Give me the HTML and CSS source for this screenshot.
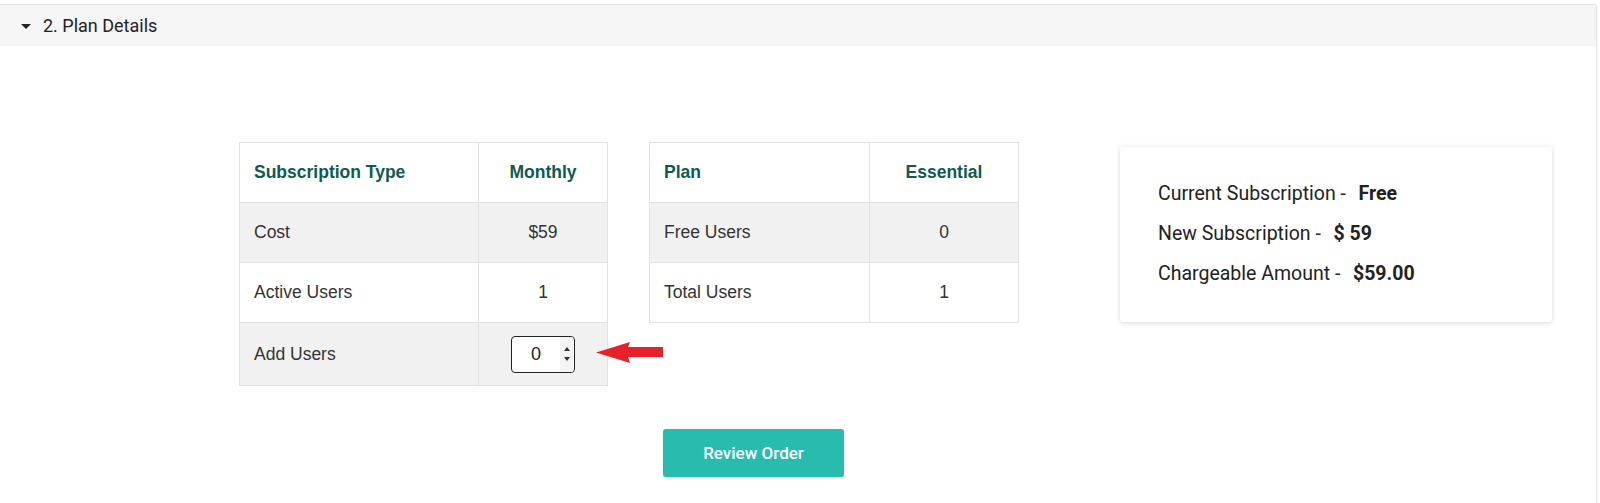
FILE: index.html
```html
<!DOCTYPE html>
<html lang="en">
<head>
    <meta charset="UTF-8">
    <meta name="viewport" content="width=device-width, initial-scale=1.0">
    <title>Plan Details</title>
    <link rel="stylesheet" href="styles.css">
</head>
<body>
    <div class="panel">
        <div class="panel-header">
            <span class="caret"></span>
            <span class="panel-title">2. Plan Details</span>
        </div>

        <div class="plan-row">
            <div class="tables">
                <table class="plan-table plan-table-sub">
                    <colgroup>
                        <col class="col-a">
                        <col class="col-b">
                    </colgroup>
                    <thead>
                        <tr>
                            <th>Subscription Type</th>
                            <th class="center">Monthly</th>
                        </tr>
                    </thead>
                    <tbody>
                        <tr class="shade">
                            <td>Cost</td>
                            <td class="center">$59</td>
                        </tr>
                        <tr>
                            <td>Active Users</td>
                            <td class="center">1</td>
                        </tr>
                        <tr class="shade input-row">
                            <td>Add Users</td>
                            <td class="center">
                                <div class="stepper">
                                    <input class="stepper-value" type="text" value="0">
                                    <div class="stepper-spin">
                                        <span class="spin-up"></span>
                                        <span class="spin-down"></span>
                                    </div>
                                </div>
                            </td>
                        </tr>
                    </tbody>
                </table>

                <!-- pointer to the add users field -->
                <svg class="hint-arrow" width="67" height="22" viewBox="0 0 67 22">
                    <polygon points="0,10.5 34,0 32,5 67,5 67,15 32,15 34,21" fill="#e5222b"/>
                </svg>

                <table class="plan-table plan-table-plan">
                    <colgroup>
                        <col class="col-c">
                        <col class="col-d">
                    </colgroup>
                    <thead>
                        <tr>
                            <th>Plan</th>
                            <th class="center">Essential</th>
                        </tr>
                    </thead>
                    <tbody>
                        <tr class="shade">
                            <td>Free Users</td>
                            <td class="center">0</td>
                        </tr>
                        <tr>
                            <td>Total Users</td>
                            <td class="center">1</td>
                        </tr>
                    </tbody>
                </table>
            </div>

            <div class="summary-card">
                <p>Current Subscription - &nbsp;<b>Free</b></p>
                <p>New Subscription - &nbsp;<b>$ 59</b></p>
                <p>Chargeable Amount - &nbsp;<b>$59.00</b></p>
            </div>
        </div>

        <div class="actions">
            <button class="review-btn" type="button">Review Order</button>
        </div>
    </div>
</body>
</html>
```

FILE: styles.css
```css
body {
    margin: 0;
    background-color: white;
    font-family: Roboto, 'Liberation Sans', Arial, sans-serif;
    color: #222;
}

.panel {
    margin-top: 4px;
    width: 1597px;
    height: 520px;
    border: 1px solid #e4e4e4;
    border-left: none;
    border-radius: 0 3px 0 0;
    box-shadow: 0 1px 3px rgba(0, 0, 0, 0.08);
    box-sizing: border-box;
}

.panel-header {
    display: flex;
    align-items: center;
    height: 41px;
    background-color: #f5f5f5;
    padding-left: 21px;
}

.caret {
    width: 0;
    height: 0;
    border-left: 5px solid transparent;
    border-right: 5px solid transparent;
    border-top: 5.5px solid #222;
    margin-right: 12px;
    margin-top: 1px;
}

.panel-title {
    font-size: 18px;
    color: #222;
}

.plan-row {
    display: flex;
    align-items: flex-start;
    margin-top: 96px;
    padding-left: 239px;
}

.tables {
    position: relative;
    display: flex;
    align-items: flex-start;
}

.plan-table {
    border-collapse: collapse;
    table-layout: fixed;
    font-family: 'Liberation Sans', Arial, sans-serif;
    font-size: 17.5px;
    color: #333;
}

.plan-table-sub {
    width: 368px;
}

.plan-table-plan {
    width: 369px;
    margin-left: 41px;
}

.col-a { width: 239px; }
.col-b { width: 129px; }
.col-c { width: 220px; }
.col-d { width: 149px; }

.plan-table th,
.plan-table td {
    height: 60px;
    padding: 0 0 0 14px;
    border: 1px solid #e2e2e2;
    text-align: left;
    box-sizing: border-box;
}

.plan-table th {
    color: #0f5a51;
    font-weight: bold;
    background-color: white;
}

.plan-table .center {
    text-align: center;
    padding: 0;
}

.plan-table tr.shade td {
    background-color: #f1f1f1;
}

.plan-table tr.input-row td {
    height: 63px;
}

.stepper {
    display: inline-flex;
    align-items: stretch;
    width: 64px;
    height: 37px;
    border: 1.5px solid #222;
    border-radius: 4px;
    background-color: white;
    box-sizing: border-box;
    vertical-align: middle;
    overflow: hidden;
}

.stepper-value {
    width: 48px;
    border: none;
    padding: 0;
    text-align: center;
    font-family: 'Liberation Sans', Arial, sans-serif;
    font-size: 18px;
    color: #222;
    background: transparent;
    outline: none;
}

.stepper-spin {
    width: 13px;
    display: flex;
    flex-direction: column;
    justify-content: center;
    align-items: center;
    gap: 6px;
    background-color: #f4f4f4;
}

.spin-up,
.spin-down {
    width: 0;
    height: 0;
    border-left: 3.5px solid transparent;
    border-right: 3.5px solid transparent;
}

.spin-up {
    border-bottom: 4px solid #333;
}

.spin-down {
    border-top: 4px solid #333;
}

.hint-arrow {
    position: absolute;
    left: 357px;
    top: 200px;
}

.summary-card {
    width: 432px;
    height: 175px;
    margin-top: 5px;
    margin-left: 101px;
    padding: 27px 38px;
    box-sizing: border-box;
    background-color: white;
    border-radius: 3px;
    box-shadow: 0 1px 5px rgba(0, 0, 0, 0.16);
    font-size: 19.5px;
    color: #222;
}

.summary-card p {
    margin: 0;
    height: 40px;
    line-height: 40px;
}

.summary-card b {
    font-weight: bold;
    margin-left: 3px;
}

.actions {
    margin-top: 43px;
    padding-left: 663px;
}

.review-btn {
    width: 181px;
    height: 48px;
    background-color: #28bcae;
    color: white;
    border: none;
    border-radius: 3px;
    font-family: Roboto, Arial, sans-serif;
    font-weight: 500;
    font-size: 17px;
    cursor: pointer;
    box-shadow: 0 1px 2px rgba(0, 0, 0, 0.12);
}
```
